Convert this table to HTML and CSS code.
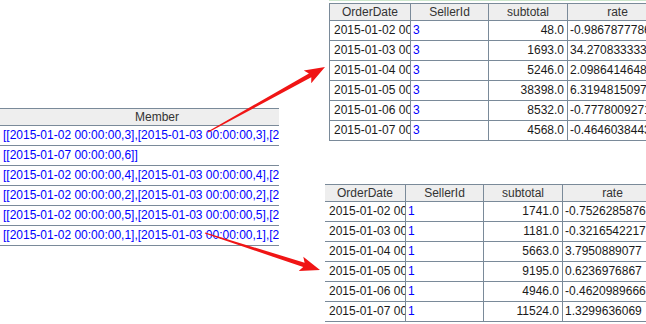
FILE: index.html
```html
<!DOCTYPE html>
<html>
<head>
<meta charset="utf-8">
<link rel="stylesheet" href="styles.css">
</head>
<body>
<div class="page">
  <section class="member-panel">
    <div class="mtable">
      <div class="mhead">Member</div>
      <div class="mrow">[[2015-01-02 00:00:00,3],[2015-01-03 00:00:00,3],[2015-01-04 00:00:00,3]]</div>
      <div class="mrow">[[2015-01-07 00:00:00,6]]</div>
      <div class="mrow">[[2015-01-02 00:00:00,4],[2015-01-03 00:00:00,4],[2015-01-04 00:00:00,4]]</div>
      <div class="mrow">[[2015-01-02 00:00:00,2],[2015-01-03 00:00:00,2],[2015-01-04 00:00:00,2]]</div>
      <div class="mrow">[[2015-01-02 00:00:00,5],[2015-01-03 00:00:00,5],[2015-01-04 00:00:00,5]]</div>
      <div class="mrow">[[2015-01-02 00:00:00,1],[2015-01-03 00:00:00,1],[2015-01-04 00:00:00,1]]</div>
    </div>
  </section>
  <section class="right">
    <div class="panel-a">
      <div class="grid grid-a">
        <div class="h">OrderDate</div><div class="h">SellerId</div><div class="h">subtotal</div><div class="h">rate</div>
        <div class="c date">2015-01-02 00:00:00</div><div class="c id">3</div><div class="c num">48.0</div><div class="c">-0.9867877786</div>
        <div class="c date">2015-01-03 00:00:00</div><div class="c id">3</div><div class="c num">1693.0</div><div class="c">34.2708333333</div>
        <div class="c date">2015-01-04 00:00:00</div><div class="c id">3</div><div class="c num">5246.0</div><div class="c">2.0986414648</div>
        <div class="c date">2015-01-05 00:00:00</div><div class="c id">3</div><div class="c num">38398.0</div><div class="c">6.3194815097</div>
        <div class="c date">2015-01-06 00:00:00</div><div class="c id">3</div><div class="c num">8532.0</div><div class="c">-0.7778009271</div>
        <div class="c date">2015-01-07 00:00:00</div><div class="c id">3</div><div class="c num">4568.0</div><div class="c">-0.4646038443</div>
      </div>
    </div>
    <div class="panel-b">
      <div class="grid">
        <div class="h">OrderDate</div><div class="h">SellerId</div><div class="h">subtotal</div><div class="h">rate</div>
        <div class="c date">2015-01-02 00:00:00</div><div class="c id">1</div><div class="c num">1741.0</div><div class="c">-0.7526285876</div>
        <div class="c date">2015-01-03 00:00:00</div><div class="c id">1</div><div class="c num">1181.0</div><div class="c">-0.3216542217</div>
        <div class="c date">2015-01-04 00:00:00</div><div class="c id">1</div><div class="c num">5663.0</div><div class="c">3.7950889077</div>
        <div class="c date">2015-01-05 00:00:00</div><div class="c id">1</div><div class="c num">9195.0</div><div class="c">0.6236976867</div>
        <div class="c date">2015-01-06 00:00:00</div><div class="c id">1</div><div class="c num">4946.0</div><div class="c">-0.4620989666</div>
        <div class="c date">2015-01-07 00:00:00</div><div class="c id">1</div><div class="c num">11524.0</div><div class="c">1.3299636069</div>
      </div>
    </div>
  </section>
  <svg class="arrows" width="646" height="324" viewBox="0 0 646 324">
    <polygon points="208.2,132.6 311.3,77.2 311.2,83.2 325,67 303.8,70.4 308.9,73.4 207.8,131.4" fill="#f01515"/>
    <polygon points="204.8,233.6 303.2,267.0 298.7,271 320,270 303.3,256.8 304.6,262.7 205.2,232.4" fill="#f01515"/>
  </svg>
</div>
</body>
</html>
```

FILE: styles.css
```css
html, body {
  margin: 0;
  padding: 0;
  background: #ffffff;
}

.page {
  position: relative;
  display: flex;
  width: 646px;
  height: 324px;
  overflow: hidden;
  font-family: "Liberation Sans", Arial, sans-serif;
  font-size: 12px;
  color: #1a1a1a;
}

.member-panel {
  width: 279px;
  flex: none;
  padding-top: 108px;
  overflow: hidden;
}

.mtable {
  width: 314px;
}

.mhead {
  box-sizing: border-box;
  height: 18px;
  line-height: 16px;
  border-top: 1px solid #7a8a99;
  border-bottom: 1px solid #7a8a99;
  background: #eeeeee;
  color: #333333;
  text-align: center;
}

.mrow {
  box-sizing: border-box;
  height: 20px;
  line-height: 19px;
  padding-left: 3px;
  border-bottom: 1px solid #7a8a99;
  color: #0000ff;
  white-space: nowrap;
  overflow: hidden;
}

.right {
  flex: 1;
  min-width: 0;
  margin-left: 46px;
  overflow: hidden;
}

.panel-a {
  margin-left: 4px;
  border-top: 1px solid #cce6cc;
  padding-top: 2px;
}

.panel-b {
  margin-top: 43px;
}

.grid {
  display: grid;
  grid-template-columns: 81px 78px 79px 100px;
  width: 338px;
}

.grid-a {
  border-left: 1px solid #7a8a99;
}

.h {
  box-sizing: border-box;
  height: 18px;
  line-height: 16px;
  border-top: 1px solid #7a8a99;
  border-bottom: 1px solid #7a8a99;
  border-right: 1px solid #7a8a99;
  background: #eeeeee;
  color: #333333;
  text-align: center;
  white-space: nowrap;
  overflow: hidden;
}

.c {
  box-sizing: border-box;
  height: 20px;
  line-height: 19px;
  padding: 0 2px;
  border-bottom: 1px solid #7a8a99;
  border-right: 1px solid #7a8a99;
  white-space: nowrap;
  overflow: hidden;
}

.date {
  padding-left: 4px;
}

.id {
  color: #0000ff;
}

.num {
  text-align: right;
  padding-right: 3px;
}

.arrows {
  position: absolute;
  left: 0;
  top: 0;
  pointer-events: none;
}
```
